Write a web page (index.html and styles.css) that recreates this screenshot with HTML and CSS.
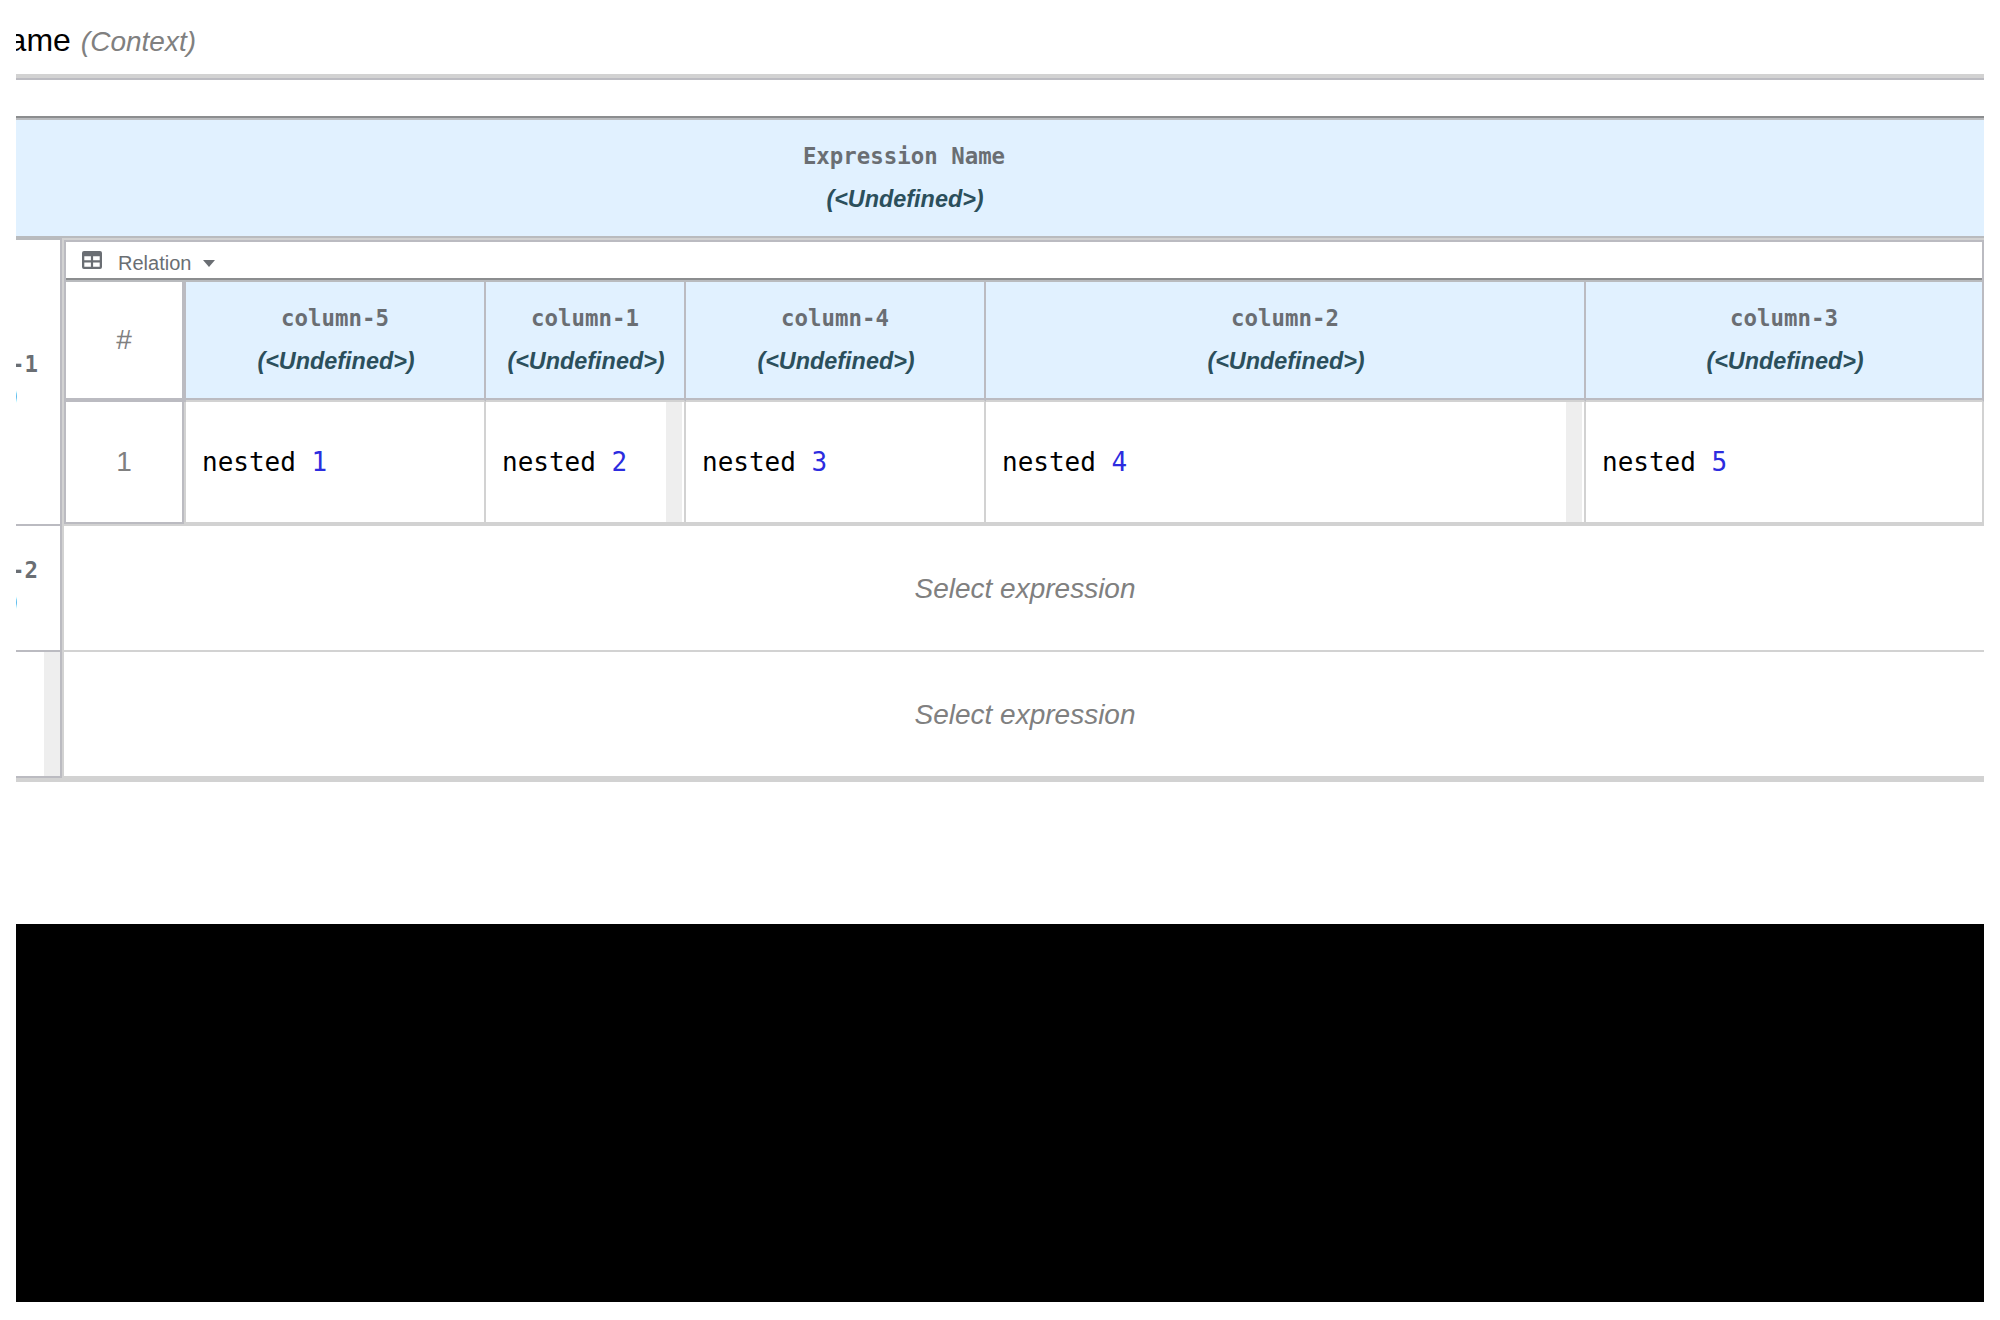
FILE: index.html
```html
<!DOCTYPE html>
<html lang="en">
<head>
<meta charset="utf-8">
<title>Boxed expression editor</title>
<link rel="stylesheet" href="styles.css">
</head>
<body>
<main class="editor">
  <h1 class="title"><span class="title-text"><span>Expression Name</span> <em>(Context)</em></span></h1>
  <section class="context">
    <header class="head context-head"><b>Expression Name</b><i>(&lt;Undefined&gt;)</i></header>
    <div class="entry entry-relation">
      <div class="entry-name"><b>-1</b><i>)</i></div>
      <div class="relation">
        <div class="relation-menu">
          <svg class="table-icon" viewBox="0 0 20 18"><path fill-rule="evenodd" d="M2 0H18Q20 0 20 2V16Q20 18 18 18H2Q0 18 0 16V2Q0 0 2 0ZM2.3 5.3V9.3H8.9V5.3ZM11.1 5.3V9.3H17.7V5.3ZM2.3 11.4V15.7H8.9V11.4ZM11.1 11.4V15.7H17.7V11.4Z"/></svg>
          <span>Relation</span>
          <svg class="caret" viewBox="0 0 12 7"><path d="M0 0H12L6 7Z"/></svg>
        </div>
        <div class="grid grid-head">
          <div class="index">#</div>
          <div class="head"><b>column-5</b><i>(&lt;Undefined&gt;)</i></div>
          <div class="head"><b>column-1</b><i>(&lt;Undefined&gt;)</i></div>
          <div class="head"><b>column-4</b><i>(&lt;Undefined&gt;)</i></div>
          <div class="head"><b>column-2</b><i>(&lt;Undefined&gt;)</i></div>
          <div class="head"><b>column-3</b><i>(&lt;Undefined&gt;)</i></div>
        </div>
        <div class="grid grid-row">
          <div class="index">1</div>
          <div class="cell">nested&nbsp;<span class="number">1</span></div>
          <div class="cell resizable">nested&nbsp;<span class="number">2</span></div>
          <div class="cell">nested&nbsp;<span class="number">3</span></div>
          <div class="cell resizable">nested&nbsp;<span class="number">4</span></div>
          <div class="cell">nested&nbsp;<span class="number">5</span></div>
        </div>
      </div>
    </div>
    <div class="entry entry-empty">
      <div class="entry-name"><b>-2</b><i>)</i></div>
      <div class="placeholder">Select expression</div>
    </div>
    <div class="entry entry-result">
      <div class="entry-name handle"></div>
      <div class="placeholder">Select expression</div>
    </div>
  </section>
  <div class="panel"></div>
</main>
</body>
</html>
```
FILE: styles.css
```css
* { box-sizing: border-box; }
body {
  margin: 0;
  background: #fff;
  font-family: "Liberation Sans", Arial, sans-serif;
}
.editor {
  width: 1968px;
  height: 1302px;
  margin: 0 16px;
  overflow: hidden;
}
.title {
  display: flex;
  height: 80px;
  margin: 0 0 36px;
  border-bottom: 2px solid #bbbbc1;
  box-shadow: inset 0 -4px #d2d2d2;
  font-size: 32px;
  font-weight: 400;
  line-height: 80px;
}
.title-text {
  width: 180px;
  display: flex;
  justify-content: flex-end;
  gap: 10px;
  white-space: nowrap;
}
.title em { font-size: 28px; line-height: 83px; color: #808080; }
.context {
  border-top: 2px solid #8b8d8f;
  border-bottom: 4px solid #d2d2d2;
}
.head {
  display: flex;
  flex-direction: column;
  align-items: center;
  padding-top: 19px;
  background: #e1f1ff;
}
.head b, .entry-name b {
  font: bold 22.4px/34px "DejaVu Sans Mono", monospace;
  color: #6a6e73;
  white-space: nowrap;
}
.head i, .entry-name i {
  margin-top: 9px;
  font-size: 23.4px;
  font-weight: 700;
  line-height: 34px;
  color: #2b4f5c;
}
.head i { padding-left: 2px; }
.context-head {
  height: 122px;
  padding-right: 192px;
  border: 2px solid #b9bbbe;
  border-width: 2px 0 4px;
}
.entry { display: flex; }
.entry-name {
  flex: none;
  width: 46px;
  display: flex;
  flex-direction: column;
  align-items: flex-end;
  overflow: hidden;
  border: 2px solid #bbbbc1;
  border-width: 0 2px 2px 0;
}
.entry-name b { margin-right: 22px; }
.entry-name i { margin: 0 43px 0 0; }
.entry-relation { height: 288px; margin-top: -2px; }
.entry-relation .entry-name { padding-top: 109px; }
.entry-empty { height: 126px; }
.entry-empty .entry-name { padding-top: 27px; }
.entry-result { height: 126px; }
.handle {
  background: linear-gradient(#eee, #eee) right / 16px 100% no-repeat;
}
.placeholder {
  flex: 1;
  padding-left: 2px;
  border: 2px solid #d2d2d2;
  border-width: 0 0 2px 2px;
  text-align: center;
  font-size: 28px;
  font-style: italic;
  line-height: 126px;
  color: #808080;
}
.relation {
  flex: 1;
  border: 2px solid #d2d2d2;
  border-right: 0;
}
.relation-menu {
  display: flex;
  height: 42px;
  padding: 3px 0 0 16px;
  border: 2px solid #bbbbc1;
  border-bottom: 0;
  box-shadow: inset 0 -2px #b9bbbe, inset 0 -4px #8b8d8f;
  font-size: 20px;
  line-height: 36px;
  color: #6a6e73;
}
.relation-menu svg { fill: #6a6e73; }
.table-icon { width: 20px; height: 18px; margin: 6px 16px 0 0; }
.caret { width: 12px; height: 7px; margin: 15px 0 0 12px; }
.grid {
  display: grid;
  grid-template-columns: 122px 300px 200px 300px 600px 398px;
}
.index {
  display: flex;
  align-items: center;
  justify-content: center;
  border: 2px solid #bbbbc1;
  border-width: 0 4px 2px 2px;
  font-size: 28px;
  color: #808080;
}
.grid-head { height: 120px; }
.grid-head .index { border-bottom-width: 4px; }
.grid-head .head {
  border-right: 2px solid #bbbbc1;
  border-bottom: 2px solid #d2d2d2;
  box-shadow: inset 0 -2px #bbbbc1;
}
.grid-row { height: 122px; }
.grid-row .index {
  border-right-width: 2px;
  box-shadow: 2px 0 #d2d2d2;
  margin-right: 2px;
}
.cell {
  display: flex;
  align-items: center;
  padding-left: 16px;
  border: 2px solid #d2d2d2;
  border-width: 0 2px 2px 0;
  font: 26px/36px "DejaVu Sans Mono", monospace;
  color: #000;
}
.resizable {
  background: linear-gradient(#eee, #eee) right 2px top / 16px 100% no-repeat;
}
.number { color: #2c2cdf; }
.panel {
  height: 378px;
  margin-top: 142px;
  background: #000;
}
```
